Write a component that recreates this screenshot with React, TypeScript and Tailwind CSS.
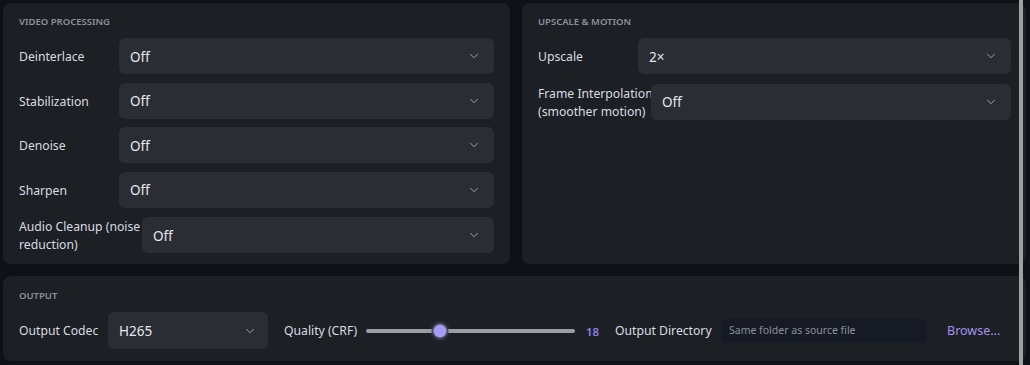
import React from "react";
import { ChevronDown } from "lucide-react";

function Select({ value }: { value: string }) {
  return (
    <div className="flex h-[36px] flex-1 items-center justify-between rounded-md bg-[#2a2d33] pl-[11px] pr-[13px] text-[13.5px] text-[#e6e8ec]">
      <span className="pt-[2px]">{value}</span>
      <ChevronDown size={14} strokeWidth={1.6} className="text-[#a4a8b0]" />
    </div>
  );
}

function Row({ label, value, labelW }: { label: React.ReactNode; value: string; labelW: string }) {
  return (
    <div className="flex items-center">
      <div className={`${labelW} shrink-0 whitespace-nowrap pt-[2px] text-[12.2px] leading-[18px] text-[#d9dce1]`}>{label}</div>
      <Select value={value} />
    </div>
  );
}

function Header({ children }: { children: React.ReactNode }) {
  return (
    <div className="text-[9.5px] font-semibold uppercase leading-[14px] text-[#8c919a]">
      {children}
    </div>
  );
}

export default function App() {
  return (
    <div
      className="relative h-[365px] w-full overflow-hidden bg-[#0e1117] pl-[3px] pr-[4px] pt-[3px]"
      style={{ fontFamily: '"Noto Sans", "Open Sans", sans-serif' }}
    >
      <div className="grid grid-cols-[507px_1fr] gap-[12px]">
        <div className="flex h-[261px] flex-col rounded-lg bg-[#1c1f24] px-[16px] pt-[12px]">
          <Header>Video Processing</Header>
          <div className="mt-[9px] flex flex-col gap-[8.5px]">
            <Row label="Deinterlace" value="Off" labelW="w-[100px]" />
            <Row label="Stabilization" value="Off" labelW="w-[100px]" />
            <Row label="Denoise" value="Off" labelW="w-[100px]" />
            <Row label="Sharpen" value="Off" labelW="w-[100px]" />
            <Row
              label={
                <>
                  Audio Cleanup (noise
                  <br />
                  reduction)
                </>
              }
              value="Off"
              labelW="w-[123px]"
            />
          </div>
        </div>
        <div className="flex h-[261px] flex-col rounded-lg bg-[#1c1f24] pl-[16px] pr-[15px] pt-[12px]">
          <Header>Upscale &amp; Motion</Header>
          <div className="mt-[9px] flex flex-col gap-[8.5px]">
            <Row label="Upscale" value="2×" labelW="w-[100px]" />
            <Row
              label={
                <>
                  Frame Interpolation
                  <br />
                  (smoother motion)
                </>
              }
              value="Off"
              labelW="w-[113px]"
            />
          </div>
        </div>
      </div>
      <div className="mt-[12px] flex h-[85px] flex-col rounded-lg bg-[#1c1f24] px-[16px] pt-[13px]">
        <Header>Output</Header>
        <div className="mt-[9px] flex items-center whitespace-nowrap text-[12.2px] text-[#d9dce1]">
          <span className="w-[81px] pt-[2px]">Output Codec</span>
          <div className="ml-[8px] flex h-[37px] w-[160px] shrink-0 items-center justify-between rounded-md bg-[#2a2d33] pl-[11px] pr-[11px] text-[13.5px] text-[#e6e8ec]">
            <span className="pt-[2px]">H265</span>
            <ChevronDown size={14} strokeWidth={1.6} className="text-[#a4a8b0]" />
          </div>
          <span className="ml-[16px] w-[73px] pt-[2px]">Quality (CRF)</span>
          <div className="relative ml-[9px] flex h-[16px] w-[209px] shrink-0 items-center">
            <div className="h-[4px] w-full rounded-full bg-[#9c9ea3]" />
            <div
              className="absolute top-1/2 h-[13px] w-[13px] -translate-x-1/2 -translate-y-1/2 rounded-full bg-[#a89bf7] shadow-[0_0_0_2px_rgba(70,70,85,0.9),0_0_4px_2px_rgba(120,110,180,0.35)]"
              style={{ left: "35.3%" }}
            />
          </div>
          <span className="ml-[11px] w-[12px] pt-[2px] text-[11.5px] font-semibold text-[#8d80ee]">18</span>
          <span className="ml-[17px] w-[96px] pt-[2px]">Output Directory</span>
          <div className="ml-[10px] flex h-[24px] w-[206px] shrink-0 items-center rounded-[4px] bg-[#151a24] px-[8px] pt-[1px] text-[10.5px] text-[#8c9199]">
            Same folder as source file
          </div>
          <span className="ml-[20px] pt-[2px] text-[12.5px] text-[#a493ef]">Browse...</span>
        </div>
      </div>
      <div className="absolute left-[1019px] top-0 h-full w-[4px] bg-[#a0a0a0]" />
    </div>
  );
}
